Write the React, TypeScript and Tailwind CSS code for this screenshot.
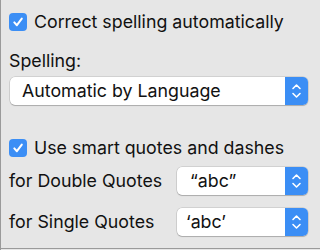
import React from "react";

function Check() {
  return (
    <div className="w-[18px] h-[18px] rounded-[4px] bg-[#3b8ef5] flex items-center justify-center shrink-0">
      <svg width="12" height="12" viewBox="0 0 12 12">
        <path d="M2.3 6.4 L4.9 9.2 L9.8 2.6" fill="none" stroke="white" strokeWidth="2" strokeLinecap="round" strokeLinejoin="round" />
      </svg>
    </div>
  );
}

function Stepper() {
  return (
    <div className="w-[23px] self-stretch bg-[#3b8ef5] rounded-r-[5px] flex items-center justify-center">
      <svg width="11" height="18" viewBox="0 0 11 18">
        <path d="M2 6.5 L5.5 3 L9 6.5" fill="none" stroke="white" strokeWidth="1.6" strokeLinecap="round" strokeLinejoin="round" />
        <path d="M2 11.5 L5.5 15 L9 11.5" fill="none" stroke="white" strokeWidth="1.6" strokeLinecap="round" strokeLinejoin="round" />
      </svg>
    </div>
  );
}

function Select({ label, className, textPad }: { label: string; className: string; textPad: string }) {
  return (
    <div className={`h-[28px] flex items-stretch bg-white rounded-[5px] shadow-[0_0_0_0.5px_rgba(0,0,0,0.18),0_1px_1px_rgba(0,0,0,0.18)] ${className}`}>
      <div className={`flex-1 flex items-center ${textPad}`}>{label}</div>
      <Stepper />
    </div>
  );
}

export default function App() {
  return (
    <div
      className="w-[320px] h-[250px] bg-[#e6e6e6] text-[#111] border-l border-[#9a9a9a] relative overflow-hidden"
      style={{ fontFamily: "Inter, 'Liberation Sans', sans-serif" }}
    >
      <div className="flex flex-col pl-[8px] pr-[12px] pt-[13px] text-[17.8px] leading-[20px]">
        <div className="flex items-center gap-[7px] h-[18px]">
          <Check />
          <span>Correct spelling automatically</span>
        </div>
        <div className="mt-[20px] h-[20px]">Spelling:</div>
        <Select label="Automatic by Language" className="mt-[6px] ml-[1px]" textPad="pl-[12px]" />
        <div className="flex items-center gap-[7px] h-[18px] mt-[34px]">
          <Check />
          <span>Use smart quotes and dashes</span>
        </div>
        <div className="flex items-center mt-[10px]">
          <span className="w-[168px]">for Double Quotes</span>
          <Select label="“abc”" className="flex-1" textPad="pl-[13px]" />
        </div>
        <div className="flex items-center mt-[13px]">
          <span className="w-[168px]">for Single Quotes</span>
          <Select label="‘abc’" className="flex-1" textPad="pl-[9px]" />
        </div>
      </div>
      <div className="absolute left-0 right-0 bottom-[1px] h-px bg-[#9a9a9a]" />
    </div>
  );
}
